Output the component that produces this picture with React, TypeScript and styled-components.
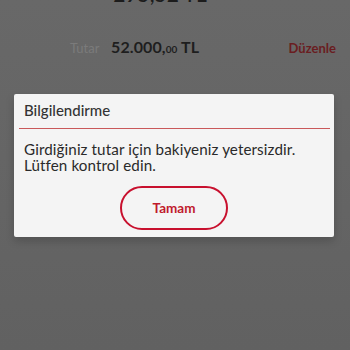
import React from "react";
import styled, { createGlobalStyle } from "styled-components";

const Global = createGlobalStyle`
  html, body { margin: 0; padding: 0; background: #666666; }
  body { font-family: Lato, "Noto Sans", sans-serif; }
`;

const Page = styled.div`
  width: 350px;
  height: 350px;
  overflow: hidden;
  background: linear-gradient(#686868, #646464 60%, #616161);
  display: flex;
  flex-direction: column;
`;

const Balance = styled.div`
  margin-top: -16px;
  height: 20px;
  text-align: center;
  padding-right: 30px;
  font-size: 21px;
  font-weight: 500;
  color: #1c1c1c;
  line-height: 20px;
`;

const AmountRow = styled.div`
  display: flex;
  align-items: baseline;
  margin-top: 33px;
  padding: 0 14px 0 70px;
  height: 24px;
`;

const Label = styled.span`
  font-size: 13px;
  color: #7b7b7b;
  width: 41px;
`;

const Amount = styled.span`
  font-size: 16px;
  font-weight: 700;
  color: #1e1e1e;
  letter-spacing: 0.1px;
  flex: 1;
`;

const Cents = styled.span`
  font-size: 10px;
`;

const EditLink = styled.span`
  font-size: 13px;
  font-weight: 700;
  color: #6a1d21;
`;

const Dialog = styled.div`
  margin: 33px 16px 0 14px;
  height: 143px;
  background: #f4f4f4;
  border-radius: 2px;
  box-shadow: 0 4px 8px rgba(0, 0, 0, 0.18);
  display: flex;
  flex-direction: column;
`;

const Title = styled.div`
  padding: 8px 10px 0;
  height: 27px;
  box-sizing: border-box;
  font-size: 15px;
  font-weight: 500;
  color: #333333;
  line-height: 17px;
`;

const Divider = styled.div`
  margin: 7px 4px 0 5px;
  border-top: 1px solid #c9585a;
`;

const Message = styled.p`
  margin: 12px 10px 0;
  font-size: 15.2px;
  line-height: 16px;
  color: #2a2a2a;
  letter-spacing: 0.1px;
`;

const Actions = styled.div`
  display: flex;
  justify-content: center;
  margin-top: 13px;
`;

const OutlineButton = styled.button`
  width: 108px;
  height: 44px;
  box-sizing: border-box;
  border: 2px solid #c8102e;
  border-radius: 22px;
  background: transparent;
  color: #c01a2c;
  font-family: inherit;
  font-size: 13.5px;
  font-weight: 700;
  padding: 0;
`;

export default function App() {
  return (
    <>
      <Global />
      <Page>
        <Balance>295,52 TL</Balance>
        <AmountRow>
          <Label>Tutar</Label>
          <Amount>
            52.000,<Cents>00</Cents> TL
          </Amount>
          <EditLink>Düzenle</EditLink>
        </AmountRow>
        <Dialog>
          <Title>Bilgilendirme</Title>
          <Divider />
          <Message>
            Girdiğiniz tutar için bakiyeniz yetersizdir.
            <br />
            Lütfen kontrol edin.
          </Message>
          <Actions>
            <OutlineButton>Tamam</OutlineButton>
          </Actions>
        </Dialog>
      </Page>
    </>
  );
}
